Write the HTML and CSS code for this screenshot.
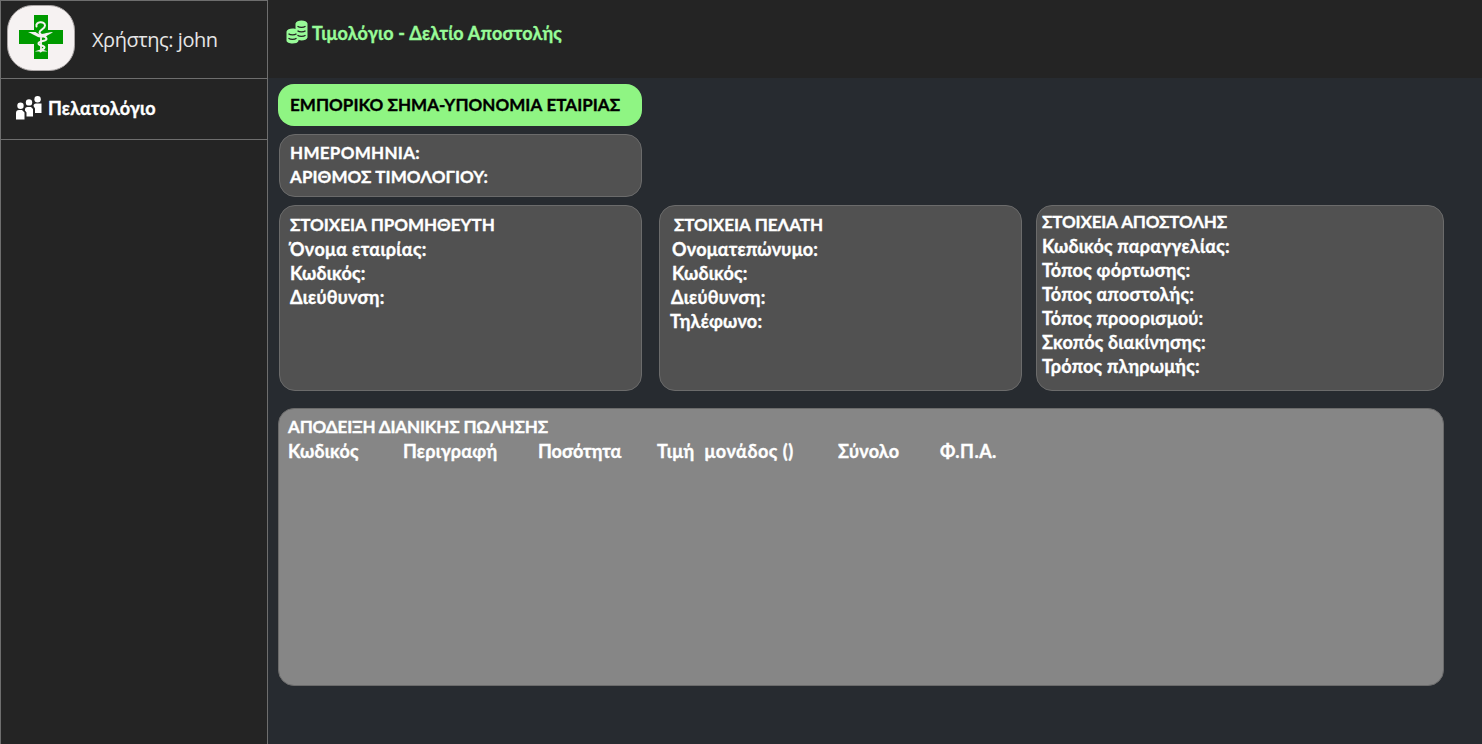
FILE: index.html
```html
<!DOCTYPE html>
<html lang="el">
<head>
<meta charset="utf-8">
<title>Τιμολόγιο - Δελτίο Αποστολής</title>
<link rel="stylesheet" href="styles.css">
</head>
<body>
<aside class="sidebar">
  <div class="user">
    <svg class="logo" width="68" height="66" viewBox="0 0 68 66">
      <rect x=".5" y=".5" width="67" height="65" rx="25" fill="#f6f2f2" stroke="#aaa5a5"/>
      <path d="M27 10h14v15h15v14H41v15H27V39H12V25h15z" fill="#009a00"/>
      <g fill="none" stroke="#f6f2f2" stroke-linecap="round">
        <path d="M29.500 21.500c-1.500-5 8.500-6 8.500-1 0 4-5.500 3.500-5.500 7 0 3 7 3.500 7 6.500 0 2.500-8 1.500-8 4.500 0 2.500 6 1.500 6 4 0 2-4 1.500-4 4" stroke-width="2"/>
        <path d="M34 33v13" stroke-width="1.800"/>
      </g>
      <path d="M21 27h7.500c1.500 1 2.500 1.800 4 2.200 3-.2 6-1.200 13.500-2.200-2 1.800-5 2.500-7 4.500-2 1.500-7 1.500-9 0-2.500-1-5-3-9-4.500zM28 46.500c4-2.200 8.500-2.200 12.500 0z" fill="#f6f2f2"/>
    </svg>
    <span class="user-name">Χρήστης: john</span>
  </div>
  <nav class="nav-item">
    <svg class="people" width="26" height="24" viewBox="0 0 26 24" fill="#fff">
      <circle cx="4.500" cy="9.700" r="3.200"/><circle cx="13" cy="6.400" r="3.200"/><circle cx="21.600" cy="3.200" r="3.200"/>
      <path d="M0 23.500v-6.500q0-3 3-3h3l2.500 2.500v7zM9 14.500v-1q0-2.500 2.500-2.500h3.500l2 2v7.500h-6.500v-4zM17.500 10q0-2.500 2.500-2.500h5.500v9.500h-6.500v-4.500z"/>
    </svg>
    <span class="t nav-label">Πελατολόγιο</span>
  </nav>
</aside>
<div class="page">
  <header class="topbar">
    <svg class="coins" width="22" height="24" viewBox="0 0 22 24">
      <path d="M9.500 3.500C10 1.500 12.500.5 15.500.5s5.500 1 6 3v14c-.5 2-3 3-6 3-1 0-2-.1-3-.4v.9c-.5 1.700-3 2.500-6 2.500S.5 22.500.5 20.500v-9c.5-2 3-3 6-3 1 0 2 .1 3 .4z" fill="#98fb98"/>
      <g fill="none" stroke="#242424" stroke-width="1.400"><path d="M11.500 6.300c2 1.400 6 1.400 8 0M11.500 10.800c2 1.400 6 1.400 8 0M11.500 15.300c2 1.400 6 1.400 8 0M2.500 13.800c2 1.400 6 1.400 8 0M2.500 18.300c2 1.400 6 1.400 8 0"/></g>
    </svg>
    <h1 class="t page-title">Τιμολόγιο - Δελτίο Αποστολής</h1>
  </header>
  <main class="content">
    <h2 class="brand"><span class="t caps brand-text">ΕΜΠΟΡΙΚΟ ΣΗΜΑ-ΥΠΟΝΟΜΙΑ ΕΤΑΙΡΙΑΣ</span></h2>
    <section class="card meta">
      <p class="t caps date">ΗΜΕΡΟΜΗΝΙΑ:</p>
      <p class="t caps number">ΑΡΙΘΜΟΣ ΤΙΜΟΛΟΓΙΟΥ:</p>
    </section>
    <div class="details">
      <section class="card supplier">
        <p class="t caps">ΣΤΟΙΧΕΙΑ ΠΡΟΜΗΘΕΥΤΗ</p>
        <p class="t supplier-name">Όνομα εταιρίας:</p>
        <p class="t">Κωδικός:</p>
        <p class="t">Διεύθυνση:</p>
      </section>
      <section class="card client">
        <p class="t caps client-head">ΣΤΟΙΧΕΙΑ ΠΕΛΑΤΗ</p>
        <p class="t client-name">Ονοματεπώνυμο:</p>
        <p class="t client-code">Κωδικός:</p>
        <p class="t client-address">Διεύθυνση:</p>
        <p class="t">Τηλέφωνο:</p>
      </section>
      <section class="card shipping">
        <p class="t caps shipping-head">ΣΤΟΙΧΕΙΑ ΑΠΟΣΤΟΛΗΣ</p>
        <p class="t">Κωδικός παραγγελίας:</p>
        <p class="t">Τόπος φόρτωσης:</p>
        <p class="t">Τόπος αποστολής:</p>
        <p class="t">Τόπος προορισμού:</p>
        <p class="t">Σκοπός διακίνησης:</p>
        <p class="t">Τρόπος πληρωμής:</p>
      </section>
    </div>
    <section class="receipt">
      <p class="t caps receipt-title">ΑΠΟΔΕΙΞΗ ΔΙΑΝΙΚΗΣ ΠΩΛΗΣΗΣ</p>
      <div class="columns">
        <span class="t">Κωδικός</span>
        <span class="t">Περιγραφή</span>
        <span class="t quantity">Ποσότητα</span>
        <span class="t unit-price">Τιμή&nbsp; μονάδος ()</span>
        <span class="t">Σύνολο</span>
        <span class="t vat">Φ.Π.Α.</span>
      </div>
    </section>
  </main>
</div>
</body>
</html>
```
FILE: styles.css
```css
* { box-sizing: border-box; }
body {
  margin: 0;
  height: 744px;
  display: grid;
  grid-template-columns: 268px 1fr;
  background: #272b30;
  color: #fff;
  font-family: Lato, "Noto Sans", sans-serif;
  overflow: hidden;
}
h1, h2, p { margin: 0; }
.t {
  font-size: 18px;
  font-weight: 700;
  line-height: 24px;
  letter-spacing: .22px;
  white-space: nowrap;
  -webkit-text-stroke: .35px currentColor;
}
.sidebar {
  background: #242424;
  border: 1px solid #6e6e6e;
  border-bottom: 0;
}
.user {
  height: 78px;
  display: flex;
  align-items: center;
  padding-left: 6px;
  border-bottom: 1px solid #6e6e6e;
}
.logo { margin-top: -4px; }
.user-name {
  margin-left: 17px;
  font: 400 20px/24px "Open Sans", sans-serif;
  letter-spacing: -.45px;
  color: #e6e6e6;
  white-space: nowrap;
}
.nav-item {
  height: 61px;
  display: flex;
  align-items: center;
  padding: 0 0 2px 15px;
  border-bottom: 1px solid #6e6e6e;
}
.nav-label { margin-left: 6px; }
.topbar {
  height: 78px;
  display: flex;
  padding: 20px 0 0 18px;
  background: #242424;
  color: #98fb98;
}
.page-title { margin: 1px 0 0 4px; letter-spacing: .19px; }
.content { padding: 6px 38px 0 10px; }
.brand {
  width: 364px;
  height: 42px;
  padding: 9px 12px;
  border-radius: 16px;
  background: #8ff583;
  color: #000;
  display: flex;
}
.card {
  background: #515151;
  border: 1px solid #6b6b6b;
  border-radius: 16px;
}
.meta {
  width: 363px;
  height: 63px;
  margin: 8px 0 8px 1px;
  padding: 6px 10px;
}
.t.caps { font-size: 17px; letter-spacing: -.04px; }
.t.brand-text { letter-spacing: .04px; }
.t.date { letter-spacing: .3px; }
.t.number { letter-spacing: .08px; }
.t.shipping-head { letter-spacing: -.15px; }
.details {
  display: grid;
  grid-template-columns: 363px 363px 408px;
  column-gap: 17px;
  margin-left: 1px;
  height: 186px;
}
.supplier { padding: 7px 10px; }
.supplier-name { letter-spacing: .33px; }
.client { padding: 7px 10px; }
.client-head { padding-left: 4px; }
.client-name, .client-code { padding-left: 2px; }
.client-address { padding-left: 1px; }
.shipping { padding: 4px 5px; margin-left: -3px; margin-right: 3px; }
.receipt {
  height: 278px;
  margin-top: 17px;
  width: 1166px;
  padding: 6px 9px;
  border: 1px solid #6b6b6b;
  border-radius: 16px;
  background: #868686;
}
.t.receipt-title { letter-spacing: -.17px; }
.columns {
  display: grid;
  grid-template-columns: 115px 135px 119px 181px 102px 1fr;
}
.quantity { letter-spacing: 0; }
.unit-price { letter-spacing: .5px; }
.vat { letter-spacing: .45px; }
```
